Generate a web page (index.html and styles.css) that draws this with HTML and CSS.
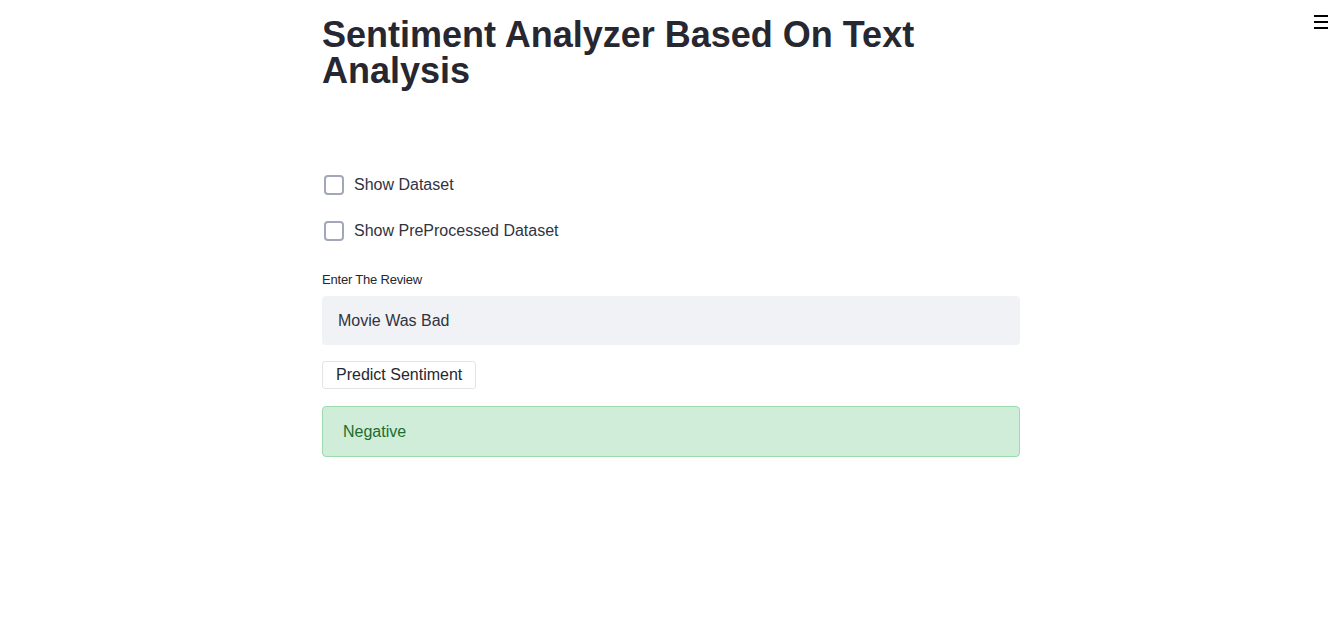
FILE: index.html
```html
<!DOCTYPE html>
<html lang="en">
<head>
<meta charset="utf-8">
<title>Sentiment Analyzer</title>
<link rel="stylesheet" href="styles.css">
</head>
<body>
<button class="menu" aria-label="Menu"><span></span><span></span><span></span></button>
<main class="main">
  <h1 class="title">Sentiment Analyzer Based On Text Analysis</h1>
  <div class="checks">
    <label class="check"><span class="box"></span><span>Show Dataset</span></label>
    <label class="check"><span class="box"></span><span>Show PreProcessed Dataset</span></label>
  </div>
  <div class="field">
    <div class="field-label">Enter The Review</div>
    <div class="input">Movie Was Bad</div>
  </div>
  <div class="btn-row"><button class="btn">Predict Sentiment</button></div>
  <div class="alert">Negative</div>
</main>
</body>
</html>
```
FILE: styles.css
```css
* { box-sizing: border-box; }
html, body { margin: 0; padding: 0; background: #fff; }
body {
  font-family: "Liberation Sans", Arial, sans-serif;
  color: #262730;
  width: 1338px;
  height: 617px;
  overflow: hidden;
  position: relative;
}
.menu {
  position: absolute;
  top: 15px;
  left: 1314px;
  width: 14px;
  height: 14px;
  padding: 0;
  border: 0;
  background: transparent;
  display: flex;
  flex-direction: column;
  justify-content: space-between;
}
.menu span { display: block; height: 2px; background: #000; width: 14px; }
.main {
  width: 698px;
  margin-left: 322px;
  padding-top: 17px;
}
.title {
  margin: 0;
  font-size: 36px;
  line-height: 36px;
  font-weight: 700;
  color: #262730;
  width: 620px;
}
.checks {
  margin-top: 86px;
  display: flex;
  flex-direction: column;
  gap: 26px;
}
.check {
  display: flex;
  align-items: center;
  gap: 10px;
  font-size: 16px;
  height: 20px;
  padding-left: 2px;
  color: #31333f;
}
.box {
  width: 20px;
  height: 20px;
  border: 2px solid #a3a8b8;
  border-radius: 4px;
  background: #fff;
}
.field { margin-top: 32px; }
.field-label {
  font-size: 13px;
  line-height: 14px;
  color: #262730;
  margin-bottom: 9px;
  letter-spacing: -0.2px;
}
.input {
  height: 49px;
  background: #f0f2f6;
  border-radius: 4px;
  padding: 0 16px;
  display: flex;
  align-items: center;
  font-size: 16px;
  color: #31333f;
}
.btn-row { margin-top: 16px; display: flex; }
.btn {
  height: 28px;
  padding: 0 13px;
  background: #fff;
  border: 1px solid #e3e4e8;
  border-radius: 3px;
  font-family: inherit;
  font-size: 16px;
  color: #262730;
}
.alert {
  margin-top: 17px;
  height: 51px;
  background: #cfedd8;
  border: 1px solid #9bdbac;
  border-radius: 4px;
  padding: 0 20px;
  display: flex;
  align-items: center;
  font-size: 16px;
  color: #1d6c2f;
}
```
